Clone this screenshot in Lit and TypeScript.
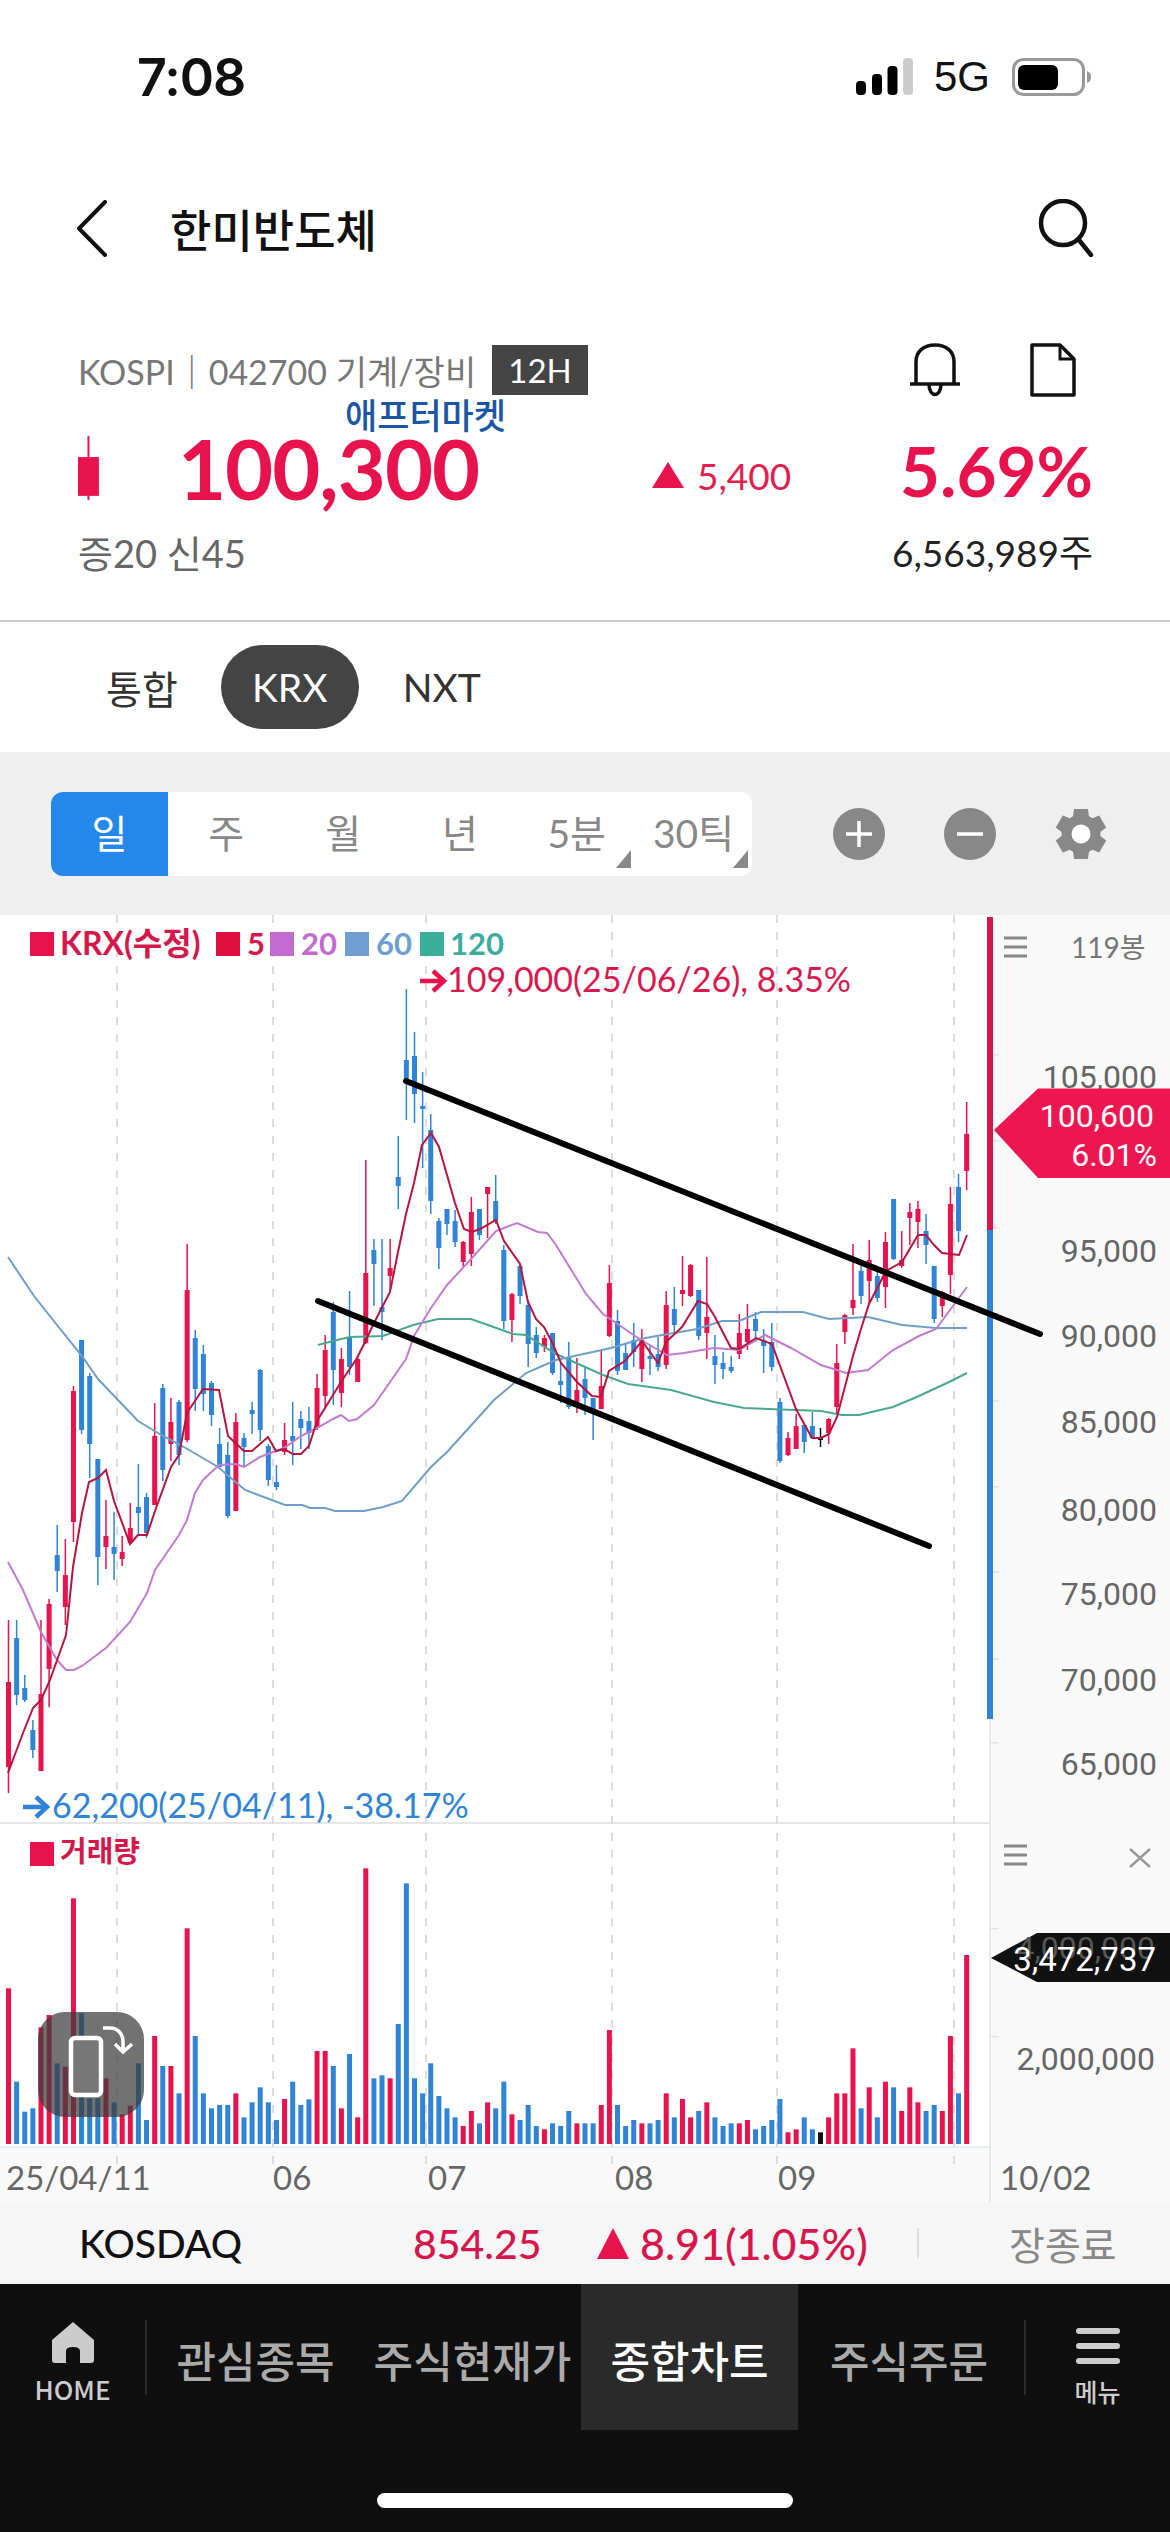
import { LitElement, html, svg, css } from 'lit';
import { customElement } from 'lit/decorators.js';

const RED = '#e8134d';
const BLUE = '#2f84d8';

// color, high, body top, body bottom, low (page px), volume bar top
const candles: [string, number, number, number, number, number][] = [
  ['r', 1620, 1682, 1767, 1793, 565], ['b', 1620, 1638, 1695, 1705, 845], ['b', 1675, 1688, 1700, 1702, 935], ['b', 1720, 1730, 1750, 1758, 925],
  ['r', 1620, 1694, 1771, 1771, 682], ['r', 1599, 1604, 1669, 1707, 645], ['b', 1525, 1555, 1571, 1592, 790], ['r', 1539, 1575, 1607, 1625, 800],
  ['r', 1386, 1391, 1522, 1542, 295], ['b', 1340, 1340, 1430, 1434, 640], ['b', 1373, 1376, 1444, 1478, 895], ['b', 1459, 1459, 1557, 1585, 895],
  ['r', 1500, 1536, 1547, 1569, 835], ['b', 1512, 1547, 1554, 1580, 907], ['r', 1536, 1552, 1559, 1566, 943], ['r', 1503, 1528, 1543, 1543, 917],
  ['b', 1464, 1507, 1513, 1534, 790], ['b', 1493, 1497, 1533, 1538, 960], ['r', 1403, 1436, 1505, 1505, 708], ['b', 1384, 1388, 1470, 1481, 798],
  ['r', 1398, 1422, 1444, 1461, 798], ['b', 1400, 1402, 1455, 1465, 880], ['r', 1244, 1290, 1440, 1442, 385], ['b', 1330, 1338, 1389, 1411, 708],
  ['b', 1345, 1354, 1394, 1411, 880], ['b', 1381, 1383, 1415, 1426, 925], ['b', 1428, 1444, 1467, 1467, 915], ['b', 1442, 1455, 1516, 1518, 915],
  ['r', 1413, 1422, 1511, 1511, 880], ['b', 1433, 1438, 1447, 1467, 952], ['b', 1402, 1410, 1414, 1434, 907], ['b', 1369, 1370, 1430, 1441, 862],
  ['b', 1444, 1446, 1480, 1486, 907], ['b', 1465, 1482, 1487, 1490, 960], ['r', 1423, 1440, 1452, 1455, 897], ['b', 1402, 1436, 1441, 1465, 845],
  ['b', 1411, 1419, 1428, 1449, 915], ['b', 1407, 1421, 1433, 1449, 898], ['r', 1374, 1388, 1428, 1430, 753], ['r', 1335, 1350, 1396, 1409, 753],
  ['b', 1302, 1312, 1370, 1405, 798], ['r', 1348, 1359, 1393, 1407, 925], ['b', 1291, 1337, 1367, 1375, 762], ['r', 1356, 1359, 1382, 1382, 952],
  ['r', 1160, 1273, 1343, 1344, 205], ['b', 1239, 1250, 1264, 1306, 835], ['b', 1239, 1307, 1312, 1340, 826], ['r', 1239, 1268, 1276, 1291, 835],
  ['b', 1136, 1177, 1186, 1209, 672], ['b', 989, 1060, 1081, 1120, 250], ['b', 1032, 1056, 1094, 1123, 835], ['b', 1072, 1106, 1109, 1168, 880],
  ['b', 1114, 1130, 1201, 1214, 790], ['b', 1218, 1221, 1248, 1269, 888], ['b', 1209, 1209, 1224, 1235, 925], ['b', 1210, 1221, 1242, 1247, 952],
  ['r', 1241, 1242, 1262, 1268, 978], ['r', 1197, 1212, 1254, 1266, 933], ['b', 1209, 1209, 1235, 1240, 970], ['r', 1187, 1187, 1194, 1238, 907],
  ['b', 1175, 1201, 1221, 1224, 925], ['b', 1245, 1250, 1321, 1329, 845], ['r', 1293, 1294, 1320, 1342, 943], ['b', 1264, 1266, 1296, 1304, 960],
  ['b', 1300, 1305, 1344, 1367, 915], ['b', 1327, 1335, 1353, 1358, 978], ['r', 1335, 1338, 1347, 1352, 988], ['b', 1333, 1333, 1373, 1375, 970],
  ['b', 1363, 1381, 1385, 1403, 978], ['b', 1342, 1358, 1407, 1409, 933], ['r', 1358, 1390, 1407, 1413, 970], ['b', 1367, 1379, 1398, 1415, 970],
  ['b', 1398, 1398, 1411, 1440, 970], ['r', 1350, 1386, 1409, 1409, 915], ['r', 1265, 1283, 1336, 1337, 690], ['b', 1310, 1321, 1371, 1375, 915],
  ['b', 1344, 1353, 1370, 1370, 978], ['b', 1323, 1340, 1352, 1367, 960], ['r', 1329, 1340, 1369, 1382, 970], ['b', 1346, 1356, 1359, 1375, 970],
  ['b', 1337, 1354, 1367, 1371, 960], ['r', 1291, 1305, 1365, 1369, 880], ['b', 1287, 1309, 1325, 1333, 952], ['r', 1256, 1290, 1294, 1306, 897],
  ['r', 1264, 1265, 1296, 1297, 952], ['b', 1290, 1290, 1336, 1340, 933], ['r', 1257, 1317, 1333, 1359, 907], ['b', 1335, 1356, 1365, 1384, 952],
  ['b', 1352, 1363, 1369, 1379, 978], ['b', 1356, 1367, 1371, 1373, 970], ['r', 1314, 1333, 1354, 1359, 970], ['r', 1304, 1329, 1342, 1350, 960],
  ['b', 1312, 1319, 1331, 1342, 988], ['b', 1329, 1340, 1346, 1373, 978], ['b', 1323, 1342, 1367, 1371, 960], ['b', 1398, 1402, 1461, 1463, 897],
  ['r', 1432, 1438, 1455, 1456, 997], ['r', 1414, 1426, 1449, 1449, 988], ['b', 1423, 1425, 1442, 1453, 952], ['b', 1412, 1426, 1438, 1439, 988],
  ['k', 1428, 1438, 1439, 1447, 997], ['r', 1418, 1419, 1433, 1444, 952], ['r', 1344, 1363, 1407, 1415, 880], ['r', 1314, 1315, 1332, 1344, 880],
  ['r', 1244, 1300, 1308, 1315, 745], ['b', 1260, 1271, 1296, 1304, 925], ['r', 1240, 1260, 1281, 1304, 862], ['b', 1268, 1276, 1298, 1302, 952],
  ['r', 1232, 1242, 1287, 1308, 845], ['b', 1199, 1199, 1259, 1260, 862], ['r', 1231, 1260, 1266, 1268, 933], ['r', 1203, 1212, 1218, 1245, 862],
  ['r', 1201, 1209, 1222, 1248, 907], ['b', 1214, 1231, 1245, 1264, 933], ['b', 1266, 1266, 1319, 1323, 915], ['r', 1291, 1292, 1306, 1317, 933],
  ['r', 1187, 1204, 1275, 1294, 708], ['b', 1174, 1187, 1231, 1242, 880], ['r', 1102, 1134, 1171, 1190, 465],
];

const ma5 = '8,1773 23,1733 33,1708 41,1700 50,1680 66,1635 73,1567 82,1513 89,1482 98,1478 106,1470 114,1501 130,1544 138,1535 147,1535 155,1511 171,1467 179,1455 187,1413 203,1389 219,1390 228,1436 244,1451 252,1451 268,1437 276,1451 284,1449 293,1454 301,1454 309,1446 317,1421 341,1382 357,1358 365,1342 374,1323 390,1292 398,1252 406,1214 414,1183 422,1145 431,1133 439,1147 455,1203 464,1229 472,1232 480,1229 496,1220 504,1241 520,1264 528,1302 536,1319 544,1327 552,1342 561,1363 577,1382 592,1396 601,1397 609,1371 625,1361 642,1341 658,1363 666,1342 682,1327 698,1301 707,1304 715,1317 731,1348 739,1349 756,1338 772,1344 796,1409 812,1438 821,1438 829,1434 837,1417 853,1356 861,1329 869,1304 886,1271 902,1262 918,1235 926,1235 934,1245 942,1253 959,1255 967,1235';
const ma20 = '8,1562 23,1590 41,1632 57,1660 66,1670 74,1670 82,1666 106,1648 130,1622 147,1593 155,1570 179,1535 187,1520 195,1493 203,1480 219,1465 236,1464 244,1467 260,1457 284,1448 301,1436 317,1428 333,1419 341,1415 349,1421 357,1419 374,1405 390,1382 406,1359 414,1336 431,1308 447,1285 472,1258 496,1231 517,1223 538,1232 547,1233 556,1245 586,1294 603,1314 641,1340 667,1355 684,1353 714,1348 739,1350 765,1335 791,1348 821,1365 846,1373 868,1370 893,1350 919,1336 936,1329 953,1306 967,1287';
const ma60 = '8,1257 34,1296 57,1325 82,1356 98,1379 138,1421 163,1436 184,1447 218,1467 245,1490 285,1505 302,1505 310,1508 325,1508 335,1511 364,1511 383,1507 402,1501 431,1467 448,1451 494,1400 526,1373 556,1360 611,1348 645,1338 697,1329 722,1321 739,1321 761,1312 803,1312 829,1319 868,1317 902,1325 936,1328 967,1328';
const ma120 = '318,1345 337,1340 350,1337 383,1336 413,1325 438,1319 471,1319 513,1334 526,1335 556,1354 603,1375 628,1384 671,1390 714,1402 744,1408 821,1411 842,1415 859,1415 893,1407 919,1396 949,1382 967,1373';

const gridX = [117, 273, 426, 612, 777, 954];
const priceLabels: [string, number][] = [['105,000', 1076], ['95,000', 1250], ['90,000', 1335], ['85,000', 1421], ['80,000', 1509], ['75,000', 1593], ['70,000', 1679], ['65,000', 1763]];
const ticks = [1054, 1140, 1227, 1313, 1400, 1486, 1571, 1658, 1742, 1928, 2036];
const dateLabels: [string, number][] = [['25/04/11', 6], ['06', 273], ['07', 428], ['08', 615], ['09', 778], ['10/02', 1000]];

const colorOf = (c: string) => (c === 'r' ? RED : c === 'b' ? BLUE : '#111');

function gearPath(cx: number, cy: number) {
  const teeth = 6;
  let d = '';
  for (let i = 0; i < teeth; i++) {
    const a = (i / teeth) * Math.PI * 2 - Math.PI / 2;
    const pts: [number, number][] = [[19.5, a - 0.42], [26, a - 0.27], [26, a + 0.27], [19.5, a + 0.42]];
    for (const [r, t] of pts) {
      d += `${d ? 'L' : 'M'}${(cx + r * Math.cos(t)).toFixed(1)} ${(cy + r * Math.sin(t)).toFixed(1)}`;
    }
  }
  return `${d}Z`;
}

@customElement('app-root')
export class AppRoot extends LitElement {
  static styles = css`
    :host {
      display: block;
      width: 1170px;
      height: 2532px;
      background: #fff;
      font-family: Lato, "Noto Sans CJK KR", sans-serif;
      color: #111;
      overflow: hidden;
    }
    svg { display: block; }

    .status {
      height: 154px;
      display: flex;
      align-items: center;
      padding: 0 78px 0 137px;
    }
    .time { font: 600 52px Inter, sans-serif; letter-spacing: -1px; flex: 1; }
    .net { font: 400 42px "Liberation Sans", sans-serif; margin: 0 22px 0 20px; }

    .head {
      height: 148px;
      display: flex;
      align-items: center;
      padding: 0 76px 0 77px;
    }
    .title {
      flex: 1;
      margin-left: 63px;
      font: 500 45px "Noto Sans CJK KR", sans-serif;
      line-height: 1;
    }

    .quote {
      height: 276px;
      border-bottom: 2px solid #ccc;
      padding: 42px 77px 0 78px;
    }
    .row { display: flex; align-items: center; }
    .r1 { height: 52px; }
    .market-line { font-size: 34px; color: #777; white-space: nowrap; width: 414px; }
    .badge {
      width: 96px;
      height: 50px;
      background: #444;
      color: #fff;
      font-size: 33px;
      display: flex;
      align-items: center;
      justify-content: center;
    }
    .r1-right { margin-left: auto; display: flex; gap: 70px; padding-right: 17px; }
    .after {
      height: 36px;
      padding-left: 267px;
      color: #1a56a4;
      font: 500 35px/36px "Noto Sans CJK KR", sans-serif;
    }
    .r3 { height: 68px; margin-top: 2px; }
    .price {
      font-size: 83px;
      font-weight: 700;
      color: #e8134d;
      margin-left: 78px;
      letter-spacing: -1px;
      width: 476px;
      line-height: 64px;
    }
    .chg { font-size: 37px; color: #e0204f; display: flex; align-items: center; gap: 13px; width: 249px; margin-top: 14px; }
    .pct { font-size: 69px; font-weight: 700; color: #e8134d; margin-top: 6px; line-height: 68px; white-space: nowrap; }
    .r4 { justify-content: space-between; margin-top: 27px; font-size: 37px; height: 44px; }
    .r4 .left { color: #666; font-size: 38px; }
    .r4 .right { color: #222; }

    .tabs {
      height: 130px;
      display: flex;
      align-items: center;
      padding-left: 106px;
      font-size: 39px;
      color: #333;
    }
    .tab-krx {
      width: 138px;
      height: 84px;
      border-radius: 42px;
      background: #444;
      color: #fff;
      display: flex;
      align-items: center;
      justify-content: center;
      margin: 0 44px 0 43px;
    }

    .toolbar {
      height: 163px;
      background: #efefef;
      display: flex;
      align-items: center;
      padding-left: 51px;
    }
    .seg {
      display: flex;
      width: 701px;
      height: 84px;
      background: #fff;
      border-radius: 12px;
      overflow: hidden;
      font-size: 39px;
      color: #888;
    }
    .seg div {
      position: relative;
      width: 117px;
      display: flex;
      align-items: center;
      justify-content: center;
      padding-bottom: 6px;
      box-sizing: border-box;
    }
    .seg .on { background: #2488ea; color: #fff; }
    .seg .more::after {
      content: "";
      position: absolute;
      right: 4px;
      bottom: 8px;
      border-left: 15px solid transparent;
      border-bottom: 18px solid #888;
    }
    .tools { display: flex; gap: 59px; margin-left: 81px; }

    .chart { position: relative; height: 1287px; }
    .chart text { font-family: Lato, "Noto Sans CJK KR", sans-serif; }
    .chart text.axis { font-family: Roboto, sans-serif; font-size: 32px; fill: #666; }
    .chart text.tag { font-family: Roboto, sans-serif; text-anchor: end; }
    .rotate {
      position: absolute;
      left: 38px;
      top: 1097px;
      width: 106px;
      height: 105px;
      border-radius: 27px;
      background: rgba(60, 60, 60, 0.72);
    }

    .index {
      height: 82px;
      background: #f6f6f6;
      display: flex;
      align-items: center;
      padding-left: 79px;
      font-size: 40px;
      font-weight: 500;
    }
    .idx-name { width: 334px; color: #111; font-size: 39px; }
    .idx-val { width: 184px; color: #d9164b; font-size: 41px; }
    .idx-chg { width: 320px; color: #d9164b; display: flex; align-items: center; gap: 11px; font-size: 43px; }
    .idx-sep { width: 2px; height: 30px; background: #ddd; margin-right: 90px; }
    .idx-end { color: #888; font-size: 39px; font-weight: 400; }

    .nav { height: 248px; background: #0f0f0f; position: relative; }
    .nav-row { display: flex; height: 146px; align-items: stretch; color: #aaa; }
    .nav-item {
      display: flex;
      align-items: center;
      justify-content: center;
      font: 500 43px "Noto Sans CJK KR", sans-serif;
      width: 217px;
      padding-top: 4px;
      box-sizing: border-box;
    }
    .nav-item.wide { width: 226px; padding-right: 4px; }
    .nav-item.on { background: #2a2a2a; color: #fff; }
    .nav-side {
      width: 145px;
      display: flex;
      flex-direction: column;
      align-items: center;
      justify-content: flex-start;
      padding-top: 38px;
      box-sizing: border-box;
      color: #ccc;
    }
    .nav-side.menu { width: 143px; }
    .nav-sep { width: 2px; height: 75px; margin-top: 36px; background: #2a2a2a; }
    .nav-label { font: 500 26px "Noto Sans CJK KR", Lato, sans-serif; margin-top: 10px; line-height: 30px; }
    .nav-label.small { font-size: 25px; margin-top: 12px; }
    .bars { display: flex; flex-direction: column; gap: 9px; padding-top: 6px; }
    .bars i { display: block; width: 44px; height: 6px; background: #ccc; border-radius: 3px; }
    .indicator { width: 416px; height: 15px; margin: 63px auto 0; background: #fff; border-radius: 8px; }
  `;

  renderStatus() {
    return html`<div class="status">
      <div class="time">7:08</div>
      <svg width="58" height="38" viewBox="0 0 58 38">
        <rect x="0" y="23" width="10" height="14" rx="4" fill="#000"></rect>
        <rect x="16" y="16" width="10" height="21" rx="4" fill="#000"></rect>
        <rect x="31.5" y="8" width="10" height="29" rx="4" fill="#000"></rect>
        <rect x="47" y="0" width="10" height="37" rx="4" fill="#ccc"></rect>
      </svg>
      <div class="net">5G</div>
      <svg width="80" height="38" viewBox="0 0 80 38">
        <rect x="1.5" y="1.5" width="70" height="35" rx="10" fill="none" stroke="#999" stroke-width="3"></rect>
        <rect x="6" y="7" width="40" height="25" rx="6" fill="#000"></rect>
        <path d="M75 13v12c3-1 4-3 4-6s-1-5-4-6z" fill="#999"></path>
      </svg>
    </div>`;
  }

  renderHead() {
    return html`<div class="head">
      <svg width="30" height="57" viewBox="0 0 30 57">
        <path d="M28 2 2 28.5 28 55" fill="none" stroke="#111" stroke-width="4" stroke-linecap="round" stroke-linejoin="round"></path>
      </svg>
      <div class="title">한미반도체</div>
      <svg width="56" height="58" viewBox="0 0 56 58">
        <circle cx="25" cy="24" r="22" fill="none" stroke="#111" stroke-width="4.5"></circle>
        <path d="M41 41 53 56" fill="none" stroke="#111" stroke-width="4.5" stroke-linecap="round"></path>
      </svg>
    </div>`;
  }

  renderQuote() {
    return html`<div class="quote">
      <div class="row r1">
        <div class="market-line">KOSPI｜042700 기계/장비</div>
        <div class="badge">12H</div>
        <div class="r1-right">
          <svg width="50" height="54" viewBox="0 0 50 54">
            <path d="M6 41V19C6 8 14 2 25 2s19 6 19 17v22" fill="none" stroke="#111" stroke-width="3.5"></path>
            <path d="M1 41h48" stroke="#111" stroke-width="3.5" stroke-linecap="round"></path>
            <path d="M19 41c0 14 12 14 12 0" fill="none" stroke="#111" stroke-width="3.5"></path>
          </svg>
          <svg width="46" height="54" viewBox="0 0 46 54">
            <path d="M2 2h28l14 14v36H2z" fill="none" stroke="#111" stroke-width="3.5" stroke-linejoin="round"></path>
            <path d="M30 2v14h14" fill="none" stroke="#111" stroke-width="3"></path>
          </svg>
        </div>
      </div>
      <div class="after">애프터마켓</div>
      <div class="row r3">
        <svg width="22" height="64" viewBox="0 0 22 64">
          <rect x="0" y="21" width="21" height="39" fill="${RED}"></rect>
          <rect x="9.5" y="0" width="2" height="64" fill="${RED}"></rect>
        </svg>
        <div class="price">100,300</div>
        <div class="chg">
          <svg width="32" height="26" viewBox="0 0 32 26"><path d="M16 0 32 26H0z" fill="${RED}"></path></svg>
          <span>5,400</span>
        </div>
        <div class="pct">5.69%</div>
      </div>
      <div class="row r4">
        <div class="left">증20 신45</div>
        <div class="right">6,563,989주</div>
      </div>
    </div>`;
  }

  renderToolbar() {
    return html`<div class="tabs">
        <div>통합</div>
        <div class="tab-krx">KRX</div>
        <div>NXT</div>
      </div>
      <div class="toolbar">
        <div class="seg">
          <div class="on">일</div>
          <div>주</div>
          <div>월</div>
          <div>년</div>
          <div class="more">5분</div>
          <div class="more">30틱</div>
        </div>
        <div class="tools">
          <svg width="52" height="52" viewBox="0 0 52 52">
            <circle cx="26" cy="26" r="26" fill="#888"></circle>
            <path d="M26 13v26M13 26h26" stroke="#fff" stroke-width="3.5"></path>
          </svg>
          <svg width="52" height="52" viewBox="0 0 52 52">
            <circle cx="26" cy="26" r="26" fill="#888"></circle>
            <path d="M13 26h26" stroke="#fff" stroke-width="3.5"></path>
          </svg>
          <svg width="52" height="52" viewBox="0 0 52 52">
            <path d="${gearPath(26, 26)}" fill="#888"></path>
            <circle cx="26" cy="26" r="9.5" fill="#fff"></circle>
          </svg>
        </div>
      </div>`;
  }

  renderCandles() {
    return candles.map(([c, hi, top, bot, lo, vol], i) => {
      const x = 8.5 + 8.12 * i;
      const fill = colorOf(c);
      const volTop = 1800 + vol / 3;
      return svg`
        <rect x="${x - 0.75}" y="${hi}" width="1.5" height="${lo - hi}" fill="${fill}"></rect>
        <rect x="${x - 2.5}" y="${top}" width="5" height="${Math.max(bot - top, 2)}" fill="${fill}"></rect>
        <rect x="${x - 2.5}" y="${volTop}" width="5" height="${2144 - volTop}" fill="${fill}"></rect>`;
    });
  }

  renderLegend() {
    const swatch = (x: number, y: number, fill: string, h = 24) =>
      svg`<rect x="${x}" y="${y}" width="24" height="${h}" fill="${fill}"></rect>`;
    return svg`
      ${swatch(30, 932, RED)}
      <text x="60" y="955" font-size="32" font-weight="700" fill="#d4184c">KRX(수정)</text>
      ${swatch(216, 932, '#e00f3f')}
      <text x="247" y="955" font-size="31" font-weight="700" fill="#d4184c">5</text>
      ${swatch(270, 932, '#c46bd1')}
      <text x="301" y="955" font-size="31" font-weight="700" fill="#c46bd1">20</text>
      ${swatch(345, 932, '#6f9fd0')}
      <text x="376" y="955" font-size="31" font-weight="700" fill="#6f9fd0">60</text>
      ${swatch(420, 932, '#3aae9a')}
      <text x="450" y="955" font-size="31" font-weight="700" fill="#3aae9a">120</text>
      <path d="M420 981h22M433 971l11 10-11 10" fill="none" stroke="${RED}" stroke-width="4.5"></path>
      <text x="447" y="992" font-size="34" fill="#d7194f">109,000(25/06/26), 8.35%</text>
      <path d="M23 1807h22M36 1797l11 10-11 10" fill="none" stroke="${BLUE}" stroke-width="4.5"></path>
      <text x="52" y="1818" font-size="34" fill="${BLUE}">62,200(25/04/11), -38.17%</text>
      ${swatch(30, 1842, RED)}
      <text x="60" y="1862" font-size="29" font-weight="700" fill="#d4184c">거래량</text>`;
  }

  renderAxis() {
    return svg`
      <rect x="990" y="915" width="180" height="1287" fill="#f9f9f9"></rect>
      <rect x="0" y="2148" width="990" height="54" fill="#f9f9f9"></rect>
      <rect x="0" y="2146" width="990" height="2" fill="#e9eff7"></rect>
      <rect x="0" y="1822" width="990" height="2" fill="#e5e5e5"></rect>
      <rect x="989" y="915" width="2" height="1287" fill="#e8e8e8"></rect>
      ${ticks.map((y) => svg`<rect x="991" y="${y}" width="8" height="1.5" fill="#e4e4e4"></rect>`)}
      <rect x="987" y="917" width="6" height="313" fill="#d9164b"></rect>
      <rect x="987" y="1230" width="6" height="489" fill="${BLUE}"></rect>
      ${priceLabels.map(([t, y]) => svg`<text class="axis" x="1157" y="${y + 12}" text-anchor="end">${t}</text>`)}
      <path d="M1004 938h23M1004 947h23M1004 956h23M1004 1846h23M1004 1855h23M1004 1864h23" stroke="#888" stroke-width="3"></path>
      <text x="1071" y="958" font-size="28" fill="#777">119봉</text>
      <path d="M1130 1849 1150 1867M1150 1849 1130 1867" stroke="#999" stroke-width="2.5"></path>
      <path d="M994 1130 1038 1088.5H1170V1178H1038Z" fill="#ee1650"></path>
      <text class="tag" x="1154" y="1127" font-size="32" fill="#fff">100,600</text>
      <text class="tag" x="1157" y="1166" font-size="32" fill="#fff">6.01%</text>
      <path d="M991 1958 1037 1933H1170V1982H1037Z" fill="#111"></path>
      <text class="tag" x="1155" y="1959" font-size="32" fill="#555">4,000,000</text>
      <text class="tag" x="1156" y="1971" font-size="33" fill="#fff">3,472,737</text>
      <text class="axis" x="1155" y="2070" text-anchor="end">2,000,000</text>
      ${dateLabels.map(([t, x]) => svg`<text x="${x}" y="2190" font-size="33" fill="#666">${t}</text>`)}`;
  }

  renderChart() {
    return html`<div class="chart">
      <svg width="1170" height="1287" viewBox="0 915 1170 1287">
        ${this.renderAxis()}
        ${gridX.map((x) => svg`<path d="M${x} 915V2170" stroke="#ddd" stroke-width="2" stroke-dasharray="8 9"></path>`)}
        ${this.renderCandles()}
        <polyline points="${ma120}" fill="none" stroke="#4aa890" stroke-width="2"></polyline>
        <polyline points="${ma60}" fill="none" stroke="#6f9fc9" stroke-width="2"></polyline>
        <polyline points="${ma20}" fill="none" stroke="#c27bd0" stroke-width="2"></polyline>
        <polyline points="${ma5}" fill="none" stroke="#b3173f" stroke-width="2"></polyline>
        <path d="M406 1081 1040 1334M318 1301 929 1546" fill="none" stroke="#000" stroke-width="6" stroke-linecap="round"></path>
        ${this.renderLegend()}
      </svg>
      <div class="rotate">
        <svg width="106" height="105" viewBox="0 0 106 105">
          <rect x="33" y="26" width="30" height="57" rx="4" fill="#777" stroke="#fff" stroke-width="4.5"></rect>
          <path d="M65 16h7c8 0 13 6 13 14v10M77 32l8 8 9-8" fill="none" stroke="#fff" stroke-width="3.5"></path>
        </svg>
      </div>
    </div>`;
  }

  renderBottom() {
    return html`<div class="index">
        <div class="idx-name">KOSDAQ</div>
        <div class="idx-val">854.25</div>
        <div class="idx-chg">
          <svg width="32" height="31" viewBox="0 0 32 31"><path d="M16 0 32 31H0z" fill="${RED}"></path></svg>
          <span>8.91(1.05%)</span>
        </div>
        <div class="idx-sep"></div>
        <div class="idx-end">장종료</div>
      </div>
      <div class="nav">
        <div class="nav-row">
          <div class="nav-side">
            <svg width="44" height="42" viewBox="0 0 44 42">
              <path d="M22 0 43 18v20q0 3-3 3H29V29q0-4-7-4t-7 4v12H4q-3 0-3-3V18z" fill="#ccc"></path>
            </svg>
            <div class="nav-label">HOME</div>
          </div>
          <div class="nav-sep"></div>
          <div class="nav-item">관심종목</div>
          <div class="nav-item">주식현재가</div>
          <div class="nav-item on">종합차트</div>
          <div class="nav-item wide">주식주문</div>
          <div class="nav-sep"></div>
          <div class="nav-side menu">
            <div class="bars"><i></i><i></i><i></i></div>
            <div class="nav-label small">메뉴</div>
          </div>
        </div>
        <div class="indicator"></div>
      </div>`;
  }

  render() {
    return html`
      ${this.renderStatus()}
      ${this.renderHead()}
      ${this.renderQuote()}
      ${this.renderToolbar()}
      ${this.renderChart()}
      ${this.renderBottom()}
    `;
  }
}
